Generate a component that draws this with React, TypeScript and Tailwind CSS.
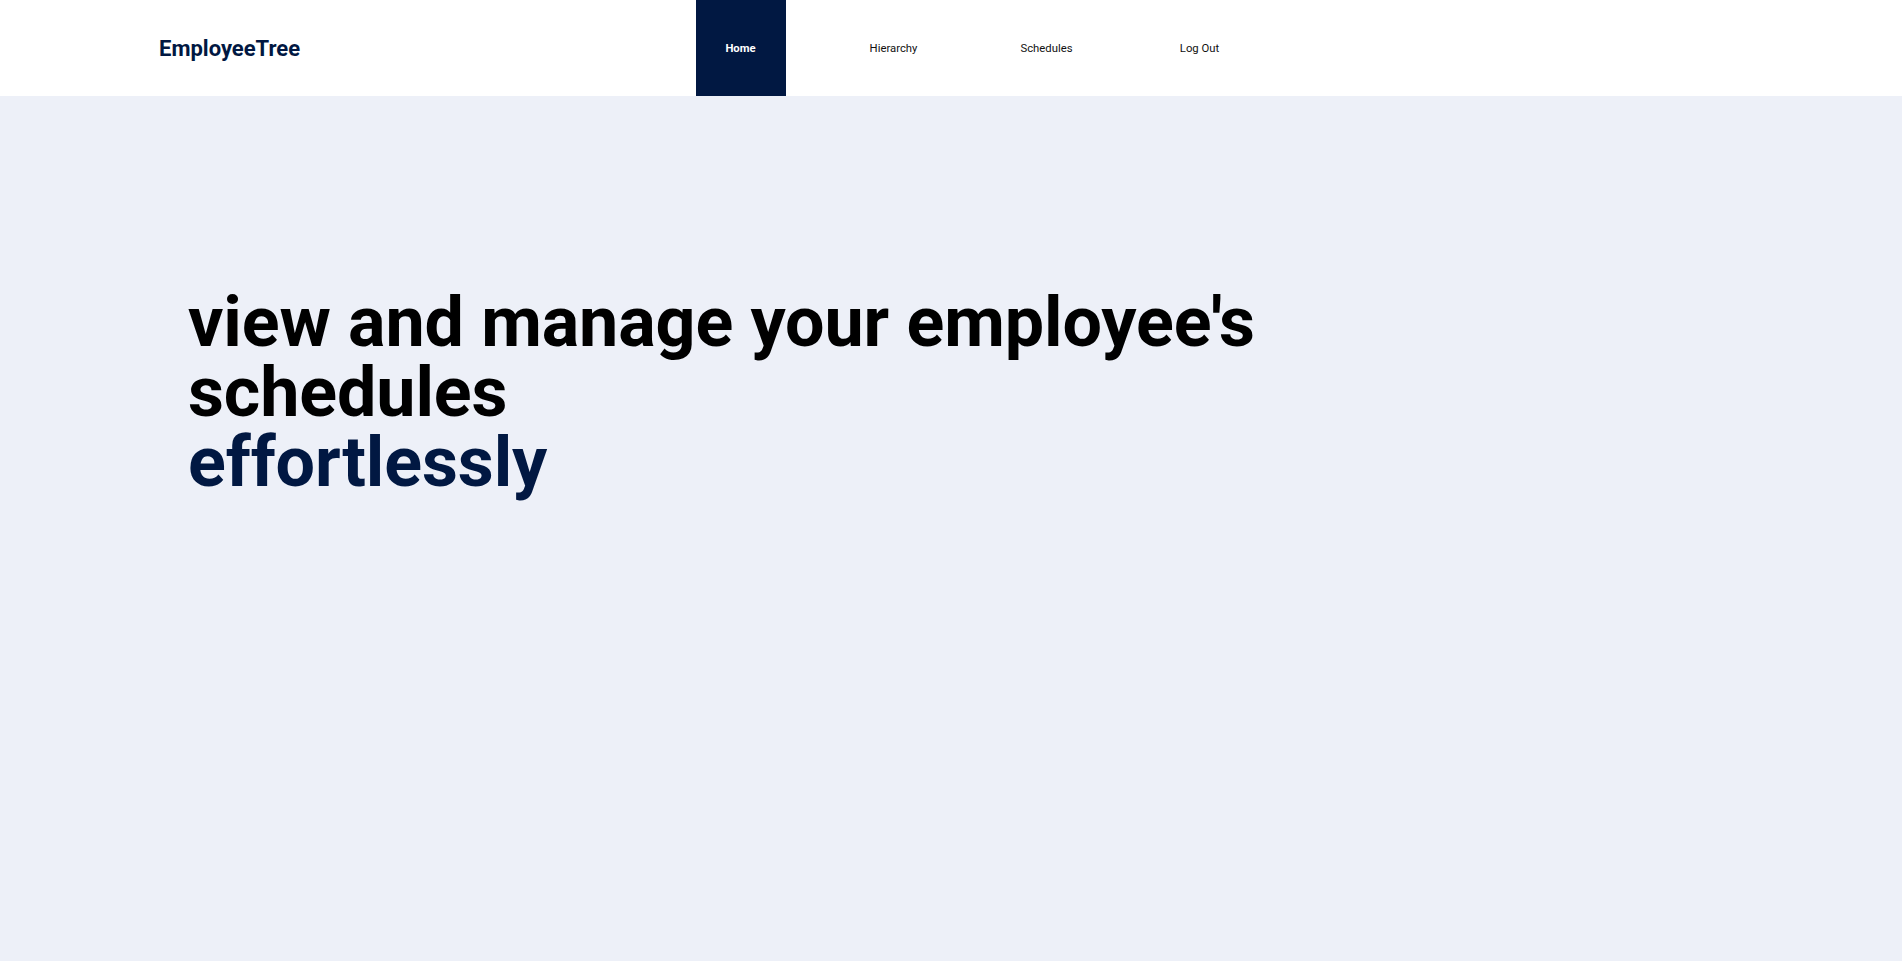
import React from 'react';

const navItems = ['Home', 'Hierarchy', 'Schedules', 'Log Out'];

export default function App() {
  const active = 'Home';

  return (
    <div className="min-h-screen bg-[#edf0f8]" style={{ fontFamily: 'Roboto, "Noto Sans", sans-serif' }}>
      {/* Top navigation */}
      <header className="h-[96px] bg-white flex items-stretch">
        <div className="w-[664px] flex items-center pl-[159px]">
          <span className="text-[22px] font-bold text-[#011842]">EmployeeTree</span>
        </div>
        <nav className="flex items-stretch">
          {navItems.map((item) => (
            <div key={item} className="w-[153px] flex items-stretch justify-center">
              {item === active ? (
                <a className="w-[90px] pt-[2px] bg-[#011842] text-white font-bold text-[11.3px] flex items-center justify-center">
                  {item}
                </a>
              ) : (
                <a className="pt-[2px] text-[11.3px] text-[#111] flex items-center">{item}</a>
              )}
            </div>
          ))}
        </nav>
      </header>

      {/* Hero */}
      <main className="pl-[188px] pt-[191px]">
        <h1 className="text-[70px] leading-[70px] font-bold text-black tracking-[-0.1px]">
          view and manage your employee's
          <br />
          schedules
          <br />
          <span className="text-[#011842]">effortlessly</span>
        </h1>
      </main>
    </div>
  );
}
